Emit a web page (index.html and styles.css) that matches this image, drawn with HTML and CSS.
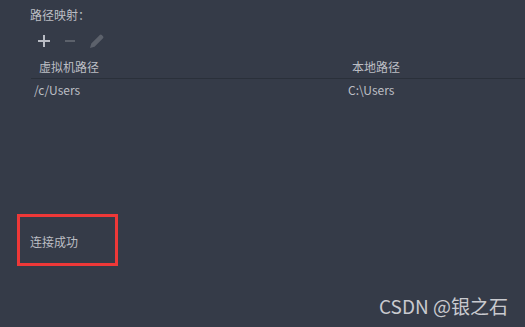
FILE: index.html
```html
<!DOCTYPE html>
<html>
<head>
<meta charset="utf-8">
<link rel="stylesheet" href="styles.css">
</head>
<body>
<div class="page">
  <div class="title">路径映射：</div>
  <div class="toolbar">
    <svg class="icon" width="14" height="14" viewBox="0 0 14 14"><path d="M7 1v12M1 7h12" stroke="#b9bcc4" stroke-width="2"/></svg>
    <svg class="icon" width="14" height="14" viewBox="0 0 14 14"><path d="M2 7h10" stroke="#5c616b" stroke-width="2"/></svg>
    <svg class="icon" width="16" height="16" viewBox="0 0 16 16"><path d="M1 15l1.3-4.5 8.5-8.5a1.4 1.4 0 0 1 2 0l1.2 1.2a1.4 1.4 0 0 1 0 2l-8.5 8.5z" fill="#5c616b"/></svg>
  </div>
  <div class="table">
    <div class="row head">
      <div class="col1">虚拟机路径</div>
      <div class="col2">本地路径</div>
    </div>
    <div class="row body">
      <div class="col1">/c/Users</div>
      <div class="col2">C:\Users</div>
    </div>
  </div>
  <div class="status">连接成功</div>
  <div class="watermark">CSDN @银之石</div>
</div>
</body>
</html>
```
FILE: styles.css
```css
html, body { margin: 0; padding: 0; }
body {
  width: 525px; height: 327px; overflow: hidden;
  background: #353b48;
  font-family: "Noto Sans CJK SC", "DejaVu Sans", sans-serif;
  font-size: 12px; color: #bcbec4;
}
.page { position: relative; width: 525px; height: 327px; }
.title { padding: 7px 0 0 30px; line-height: 16px; }
.toolbar { display: flex; gap: 12px; padding: 10px 0 0 37px; height: 16px; align-items: center; }
.table { margin: 8px 0 0 31px; }
.row { display: flex; line-height: 16px; }
.head { height: 19px; border-bottom: 1px solid #2a303a; padding-top: 2px; }
.head .col1 { padding-left: 8px; width: 313px; }
.body { padding-top: 3px; }
.body .col1 { padding-left: 3px; width: 314px; }
.status {
  position: absolute; left: 17px; top: 214px; width: 101px; height: 52px;
  border: 3px solid #ee3838; padding: 0 0 0 10px; box-sizing: border-box;
  line-height: 50px;
}
.watermark {
  position: absolute; right: 17px; top: 294px;
  font-size: 19px; color: #c9cacf; line-height: 24px;
}
```
